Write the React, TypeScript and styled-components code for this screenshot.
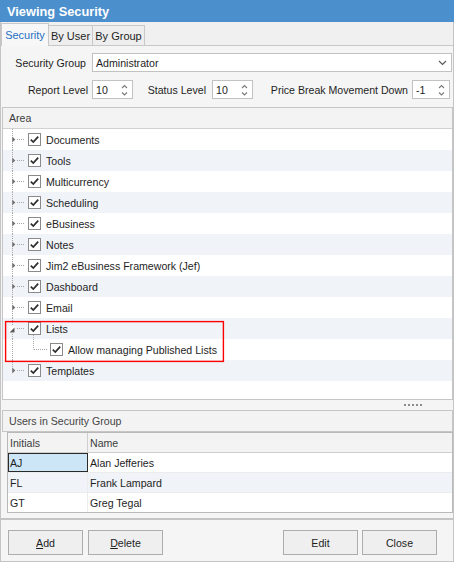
import React from 'react'
import styled, { createGlobalStyle } from 'styled-components'

const GlobalStyle = createGlobalStyle`
  html, body {
    margin: 0;
    padding: 0;
    background: #ffffff;
  }
  body {
    font-family: 'Liberation Sans', Arial, sans-serif;
    font-size: 10.6px;
    color: #1e1e1e;
  }
`

const Window = styled.div`
  width: 454px;
  height: 562px;
  display: flex;
  flex-direction: column;
  box-sizing: border-box;
  background: #f5f5f5;
`

const TitleBar = styled.div`
  height: 22px;
  flex: none;
  background: #4b8fcd;
  color: #ffffff;
  font-weight: bold;
  font-size: 12.8px;
  padding-left: 7px;
  display: flex;
  align-items: center;
`

const Body = styled.div`
  flex: 1;
  display: flex;
  flex-direction: column;
  border: 1px solid #c4c4c4;
  border-top: none;
  min-height: 0;
`

const TabStrip = styled.div`
  height: 24px;
  box-sizing: border-box;
  flex: none;
  display: flex;
  align-items: flex-end;
  background: #f0f0f0;
  border-bottom: 1px solid #c8c8c8;
`

const Tab = styled.div<{ $active?: boolean; $w: number }>`
  width: ${(p) => p.$w}px;
  box-sizing: border-box;
  height: ${(p) => (p.$active ? 23 : 20)}px;
  margin-bottom: ${(p) => (p.$active ? -1 : 0)}px;
  display: flex;
  align-items: center;
  justify-content: center;
  background: ${(p) => (p.$active ? '#f7f7f7' : '#eeeeee')};
  color: ${(p) => (p.$active ? '#1f70c4' : '#1e1e1e')};
  border-top: 1px solid #c8c8c8;
  border-right: 1px solid #c8c8c8;
  border-left: ${(p) => (p.$active ? '1px solid #c8c8c8' : 'none')};
  font-size: 11px;
`

const Form = styled.div`
  flex: none;
  padding: 7px 0 8px 0;
  display: flex;
  flex-direction: column;
  gap: 8px;
`

const FormRow = styled.div`
  display: flex;
  align-items: center;
  height: 19px;
`

const Label = styled.div<{ $w: number; $mr: number }>`
  width: ${(p) => p.$w}px;
  margin-right: ${(p) => p.$mr}px;
  text-align: right;
  white-space: nowrap;
  flex: none;
`

const InputBox = styled.div<{ $w: number }>`
  width: ${(p) => p.$w}px;
  height: 19px;
  box-sizing: border-box;
  flex: none;
  background: #ffffff;
  border: 1px solid #c2c2c2;
  display: flex;
  align-items: center;
  padding-left: 3px;
  padding-right: 4px;
  justify-content: space-between;
`

const TreePanel = styled.div`
  flex: none;
  height: 293px;
  box-sizing: border-box;
  margin-left: 1px;
  border: 1px solid #c6c6c6;
  background: #ffffff;
  display: flex;
  flex-direction: column;
`

const SectionHeader = styled.div`
  height: 20px;
  flex: none;
  border-bottom: 1px solid #d2d2d2;
  background: #f3f3f3;
  color: #3c3c3c;
  display: flex;
  align-items: center;
  padding-left: 6px;
`

const TreeRow = styled.div<{ $shaded?: boolean }>`
  height: 21px;
  display: flex;
  align-items: center;
  background: ${(p) => (p.$shaded ? '#f0f3f8' : '#ffffff')};
`

const TreeLabel = styled.span`
  margin-left: 5px;
  white-space: nowrap;
`

const CheckWrap = styled.span<{ $tail?: boolean }>`
  position: relative;
  width: 13px;
  height: 13px;
  display: inline-flex;
  flex: none;

  &::after {
    content: '';
    display: ${(p) => (p.$tail ? 'block' : 'none')};
    position: absolute;
    left: 5px;
    top: 13px;
    height: 5px;
    border-left: 1px dotted #a8a8a8;
  }
`

const Highlighted = styled.div`
  position: relative;
`

const RedBox = styled.svg`
  position: absolute;
  top: 3px;
  left: 2px;
  width: 219px;
  height: 41px;
  pointer-events: none;
  overflow: visible;
`

const Splitter = styled.div`
  height: 10px;
  flex: none;
  display: flex;
  align-items: center;
  justify-content: flex-end;
  padding-right: 31px;
  gap: 2px;
`

const Dot = styled.span`
  width: 2px;
  height: 2px;
  background: #8c8c8c;
`

const UsersHeader = styled.div`
  height: 22px;
  flex: none;
  box-sizing: border-box;
  margin-left: 1px;
  border: 1px solid #c6c6c6;
  background: #f3f3f3;
  color: #454545;
  display: flex;
  align-items: center;
  padding-left: 6px;
`

const Grid = styled.div`
  flex: none;
  margin-left: 6px;
  border: 1px solid #b9b9b9;
  background: #ffffff;
`

const GridRow = styled.div<{ $head?: boolean; $shaded?: boolean }>`
  height: 19px;
  display: flex;
  border-bottom: 1px solid ${(p) => (p.$head ? '#cfcfcf' : '#ececec')};
  background: ${(p) => (p.$head ? '#f3f3f3' : p.$shaded ? '#f0f3f8' : '#ffffff')};
  color: ${(p) => (p.$head ? '#3c3c3c' : '#1e1e1e')};

  &:last-child {
    border-bottom: none;
  }
`

const Cell = styled.div<{ $w?: number; $head?: boolean; $selected?: boolean }>`
  ${(p) => (p.$w ? `width: ${p.$w}px; flex: none;` : 'flex: 1;')}
  box-sizing: border-box;
  display: flex;
  align-items: center;
  padding-left: 2px;
  border-right: ${(p) => (p.$w ? `1px solid ${p.$head ? '#cfcfcf' : '#ececec'}` : 'none')};
  ${(p) =>
    p.$selected
      ? `background: #cde6f7; outline: 1px solid #2a2a2a; outline-offset: -1px;`
      : ''}
`

const Separator = styled.div`
  height: 2px;
  flex: none;
  margin-top: 5px;
  background: #c4c4c4;
`

const ButtonBar = styled.div`
  flex: 1;
  display: flex;
  align-items: flex-start;
  padding: 10px 16px 0 7px;
`

const ButtonGroup = styled.div<{ $gap: number }>`
  display: flex;
  gap: ${(p) => p.$gap}px;
`

const Spacer = styled.div`
  flex: 1;
`

const Button = styled.button`
  width: 75px;
  height: 25px;
  box-sizing: border-box;
  background: #efefef;
  border: 1px solid #adadad;
  border-radius: 0;
  font-family: inherit;
  font-size: 10.6px;
  color: #1e1e1e;
  padding: 0;

  u {
    text-decoration: underline;
    text-underline-offset: 1px;
  }
`

function Chevron({ up }: { up?: boolean }) {
  return (
    <polyline
      points={up ? '1,4 3.5,1.5 6,4' : '1,1.5 3.5,4 6,1.5'}
      fill="none"
      stroke="#7a7a7a"
      strokeWidth="1.1"
    />
  )
}

function SpinArrows() {
  return (
    <svg width="7" height="14" viewBox="0 0 7 14">
      <g transform="translate(0,1)">
        <Chevron up />
      </g>
      <g transform="translate(0,8)">
        <Chevron />
      </g>
    </svg>
  )
}

function Spin({ value, w }: { value: string; w: number }) {
  return (
    <InputBox $w={w}>
      <span>{value}</span>
      <SpinArrows />
    </InputBox>
  )
}

function CheckBox({ tail }: { tail?: boolean }) {
  return (
    <CheckWrap $tail={tail}>
      <svg width="13" height="13" viewBox="0 0 13 13">
        <rect x="0.5" y="0.5" width="12" height="12" fill="#ffffff" stroke="#8a8a8a" />
        <polyline
          points="2.8,6.6 5.3,9.1 10.2,3.6"
          fill="none"
          stroke="#2e2e2e"
          strokeWidth="1.7"
        />
      </svg>
    </CheckWrap>
  )
}

type ConnectorKind = 'collapsed' | 'expanded' | 'child'

function Connector({ kind, last }: { kind: ConnectorKind; last?: boolean }) {
  const w = kind === 'child' ? 47 : 25
  const dots = '#a8a8a8'
  return (
    <svg width={w} height="21" viewBox={`0 0 ${w} 21`} style={{ flex: 'none' }}>
      <line x1="9.5" y1="0" x2="9.5" y2={last ? 10.5 : 21} stroke={dots} strokeDasharray="1 1" />
      {kind === 'collapsed' && (
        <>
          <path d="M9 7 L12.5 10.5 L9 14 Z" fill="#ffffff" stroke="none" />
          <path d="M9.2 7.5 L12.3 10.5 L9.2 13.5 Z" fill="#6f6f6f" />
          <line x1="14" y1="10.5" x2="22" y2="10.5" stroke={dots} strokeDasharray="1 1" />
        </>
      )}
      {kind === 'expanded' && (
        <>
          <rect x="6" y="8" width="6" height="7" fill="#ffffff" />
          <path d="M11.5 9.5 L11.5 14.5 L6.5 14.5 Z" fill="#5a5a5a" />
          <line x1="14" y1="10.5" x2="22" y2="10.5" stroke={dots} strokeDasharray="1 1" />
        </>
      )}
      {kind === 'child' && (
        <>
          <line x1="30.5" y1="0" x2="30.5" y2="10.5" stroke={dots} strokeDasharray="1 1" />
          <line x1="31" y1="10.5" x2="45" y2="10.5" stroke={dots} strokeDasharray="1 1" />
        </>
      )}
    </svg>
  )
}

const areas = [
  'Documents',
  'Tools',
  'Multicurrency',
  'Scheduling',
  'eBusiness',
  'Notes',
  'Jim2 eBusiness Framework (Jef)',
  'Dashboard',
  'Email',
]

const users = [
  { initials: 'AJ', name: 'Alan Jefferies' },
  { initials: 'FL', name: 'Frank Lampard' },
  { initials: 'GT', name: 'Greg Tegal' },
]

export default function App() {
  return (
    <>
      <GlobalStyle />
      <Window>
        <TitleBar>Viewing Security</TitleBar>
        <Body>
          <TabStrip>
            <Tab $active $w={48}>Security</Tab>
            <Tab $w={44}>By User</Tab>
            <Tab $w={52}>By Group</Tab>
          </TabStrip>

          <Form>
            <FormRow>
              <Label $w={85} $mr={6}>Security Group</Label>
              <InputBox $w={360}>
                <span>Administrator</span>
                <svg width="9" height="6" viewBox="0 0 9 6">
                  <polyline points="1,1 4.5,4.5 8,1" fill="none" stroke="#5a5a5a" strokeWidth="1.2" />
                </svg>
              </InputBox>
            </FormRow>
            <FormRow>
              <Label $w={87} $mr={4}>Report Level</Label>
              <Spin value="10" w={41} />
              <Label $w={73} $mr={6}>Status Level</Label>
              <Spin value="10" w={41} />
              <Label $w={155} $mr={4}>Price Break Movement Down</Label>
              <Spin value="-1" w={38} />
            </FormRow>
          </Form>

          <TreePanel>
            <SectionHeader>Area</SectionHeader>
            {areas.map((a, i) => (
              <TreeRow key={a} $shaded={i % 2 === 1}>
                <Connector kind="collapsed" />
                <CheckBox />
                <TreeLabel>{a}</TreeLabel>
              </TreeRow>
            ))}
            <Highlighted>
              <TreeRow $shaded>
                <Connector kind="expanded" />
                <CheckBox tail />
                <TreeLabel>Lists</TreeLabel>
              </TreeRow>
              <TreeRow>
                <Connector kind="child" />
                <CheckBox />
                <TreeLabel>Allow managing Published Lists</TreeLabel>
              </TreeRow>
              <RedBox viewBox="0 0 219 41">
                <rect x="0.6" y="0.6" width="217.8" height="39.8" fill="none" stroke="#ff0000" strokeWidth="1.4" />
              </RedBox>
            </Highlighted>
            <TreeRow $shaded>
              <Connector kind="collapsed" last />
              <CheckBox />
              <TreeLabel>Templates</TreeLabel>
            </TreeRow>
          </TreePanel>

          <Splitter>
            <Dot />
            <Dot />
            <Dot />
            <Dot />
            <Dot />
          </Splitter>

          <UsersHeader>Users in Security Group</UsersHeader>

          <Grid>
            <GridRow $head>
              <Cell $w={80} $head>Initials</Cell>
              <Cell $head>Name</Cell>
            </GridRow>
            {users.map((u, i) => (
              <GridRow key={u.initials} $shaded={i === 1}>
                <Cell $w={80} $selected={i === 0}>{u.initials}</Cell>
                <Cell>{u.name}</Cell>
              </GridRow>
            ))}
          </Grid>

          <Separator />

          <ButtonBar>
            <ButtonGroup $gap={5}>
              <Button>
                <u>A</u>dd
              </Button>
              <Button>
                <u>D</u>elete
              </Button>
            </ButtonGroup>
            <Spacer />
            <ButtonGroup $gap={4}>
              <Button>Edit</Button>
              <Button>Close</Button>
            </ButtonGroup>
          </ButtonBar>
        </Body>
      </Window>
    </>
  )
}
